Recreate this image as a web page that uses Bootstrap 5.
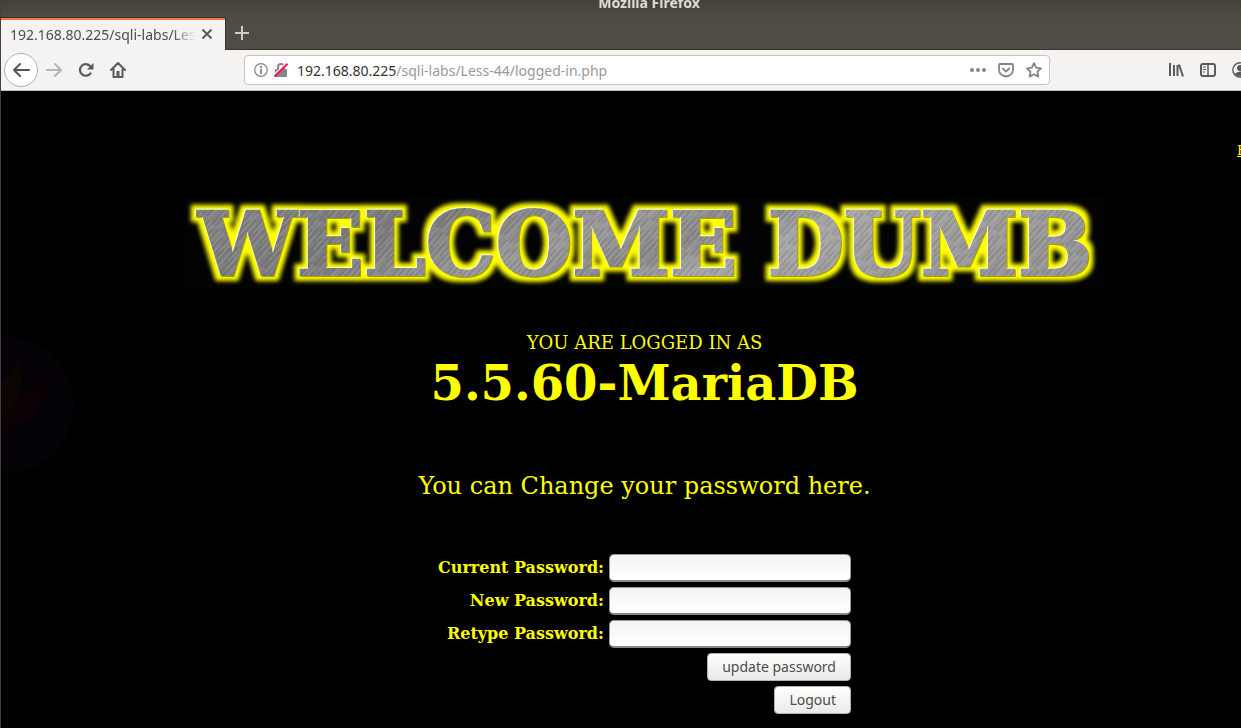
<!DOCTYPE html>
<html lang="en">
<head>
<meta charset="utf-8">
<title>192.168.80.225/sqli-labs/Less-44/logged-in.php</title>
<meta name="viewport" content="width=device-width, initial-scale=1">
<link rel="stylesheet" href="https://cdn.jsdelivr.net/npm/bootstrap@5.3.0/dist/css/bootstrap.min.css">
<style>
  :root { --ui: "Noto Sans", "Open Sans", sans-serif; --serif: "DejaVu Serif", serif; }
  body { background: #000; font-family: var(--ui); font-size: 14px; border-left: 1px solid #4a3c3f; }
  svg { display: block; flex: none; }
  .chrome-title { height: 18px; background: linear-gradient(#42413b, #4e4b43); color: #dfdbd2; font-size: 14px; line-height: 18px; padding-left: 56px; }
  .chrome-title span { margin-top: -6px; }
  .tab-strip { height: 32px; background: #504c44; }
  .tab-item { width: 224px; background: #f4f3f1; border: 0; border-top: 2px solid #f0784c; outline: 1px solid #35332e; padding: 0 10px 2px 9px; clip-path: inset(-1px -1px 0 0); }
  .tab-text { color: #4c4c4c; white-space: nowrap; width: 187px; -webkit-mask-image: linear-gradient(90deg, #000 162px, transparent 186px); mask-image: linear-gradient(90deg, #000 162px, transparent 186px); }
  .strip-rest { border-bottom: 1px solid #35332e; padding: 0 0 2px 9px; }
  .plain { background: none; border: 0; padding: 0; color: #5b5b5b; }
  .tool-row { height: 41px; background: #f4f3f1; border-bottom: 1px solid #c4c2be; padding-left: 3px; }
  .go-back { width: 34px; height: 34px; border: 1px solid #b1b1b1; border-radius: 50%; background: #fff; color: #555; margin-right: -8px; }
  .nav-set { width: 240px; gap: 16px; }
  .address { height: 30px; border: 1px solid #c6c4c1; border-radius: 4px; background: #fff; padding: 0 7px 0 9px; color: #858585; margin-right: 118px; }
  .marks { gap: 6px; }
  .acts { gap: 12px; }
  .address .url-line { color: #999; padding-left: 9px; }
  .address b { font-weight: 400; color: #333; }
  .tools-end { gap: 16px; width: 73px; }
  .page { color: #ff0; font-family: var(--serif); padding: 107px 0 12px 47px; min-height: calc(100vh - 91px); }
  .banner { width: 921px; max-width: 100%; height: auto; background: #030303; }
  .as-line { font-size: 18px; line-height: 22px; margin-top: 44px; }
  .who { font-size: 48px; line-height: 58px; font-weight: 700; }
  .hint { font-size: 24px; line-height: 28px; margin: 60px 0 49px; }
  .pass-form { border-collapse: separate; border-spacing: 5px; }
  .pass-form th { font-size: 16px; line-height: 24px; font-weight: 700; text-align: right; padding: 0; }
  .pass-form td { padding: 0; text-align: right; }
  .pass-form input { width: 242px; height: 28px; border: 1px solid #999; border-bottom: 2px solid #888; border-radius: 5px; background: linear-gradient(#f3f3f3, #fff); padding: 0 6px; display: block; }
  .sys-btn { height: 28px; border: 1px solid #b5b2ae; border-radius: 4px; background: linear-gradient(#fff, #ebe9e7); color: #4c4c4c; font: 14px/24px var(--ui); padding: 0 14px; display: inline-block; vertical-align: top; }
  .lotus { left: 0; top: 244px; }
  .corner { right: 0; top: 52px; width: 4px; font-size: 13px; line-height: 16px; }
  .corner a { color: #ff0; }
</style>
</head>
<body class="overflow-hidden">
<header>
  <div class="chrome-title d-flex justify-content-center fw-bold overflow-hidden"><span>Mozilla Firefox</span></div>
  <div class="tab-strip d-flex">
    <div class="tab-item d-flex align-items-center flex-shrink-0">
      <span class="tab-text overflow-hidden">192.168.80.225/sqli-labs/Less-44</span>
      <button class="plain ms-1" aria-label="Close tab"><svg width="12" height="12" viewBox="0 0 12 12" stroke="currentColor" stroke-width="2" fill="none"><path d="M1.500 1.500l9 9M10.500 1.500l-9 9"/></svg></button>
    </div>
    <div class="strip-rest flex-grow-1 d-flex align-items-center">
      <button class="plain" aria-label="New tab"><svg width="16" height="16" viewBox="0 0 16 16" stroke="#d0ccc3" stroke-width="2" fill="none"><path d="M8 1v14M1 8h14"/></svg></button>
    </div>
  </div>
  <nav class="tool-row d-flex align-items-center overflow-hidden" aria-label="Browser toolbar">
    <div class="nav-set d-flex align-items-center flex-shrink-0">
      <button class="go-back p-0 d-flex align-items-center justify-content-center" aria-label="Back"><svg width="18" height="16" viewBox="0 0 18 16" stroke="currentColor" stroke-width="2" fill="none" stroke-linecap="round" stroke-linejoin="round"><path d="M17 8H2M8 2L2 8l6 6"/></svg></button>
      <button class="plain" aria-label="Forward"><svg width="16" height="16" viewBox="0 0 16 16" stroke="#b6b5b4" stroke-width="2" fill="none" stroke-linecap="round" stroke-linejoin="round"><path d="M1 8h14M9 2l6 6-6 6"/></svg></button>
      <button class="plain" aria-label="Reload"><svg width="16" height="16" viewBox="0 0 16 16"><path d="M12.500 11.300A5.800 5.800 0 1 1 12 4" stroke="currentColor" stroke-width="2.200" fill="none" stroke-linecap="round"/><path d="M15.500 1v6.500H9z" fill="currentColor"/></svg></button>
      <button class="plain" aria-label="Home"><svg width="16" height="16" viewBox="0 0 16 16" stroke="currentColor" stroke-width="2" fill="none" stroke-linejoin="round" stroke-linecap="round"><path d="M1 8l7-7 7 7M3.500 7v8h9V7"/><path d="M8 9v5" stroke-width="3" stroke-linecap="butt"/></svg></button>
    </div>
    <div class="address flex-grow-1 d-flex align-items-center">
      <div class="marks d-flex">
        <svg width="14" height="14" viewBox="0 0 14 14" fill="none" stroke="currentColor"><circle cx="7" cy="7" r="6.300" stroke-width="1.200"/><path d="M7 6v5M7 3v2" stroke-width="1.800"/></svg>
        <svg width="14" height="14" viewBox="0 0 14 14"><path d="M4 6V4a3 3 0 0 1 6 0v2" fill="none" stroke="#858585" stroke-width="2"/><rect x="1" y="6" width="12" height="8" rx="1" fill="#858585"/><path d="M0 12.500L12.500 0" stroke="#fff" stroke-width="2"/><path d="M.5 13.500L13.500 .8" stroke="#ff0f4b" stroke-width="2"/></svg>
      </div>
      <span class="url-line flex-grow-1"><b>192.168.80.225</b>/sqli-labs/Less-44/logged-in.php</span>
      <div class="acts d-flex align-items-center">
        <button class="plain" aria-label="Page actions"><svg width="16" height="16" viewBox="0 0 16 16" fill="#858585"><circle cx="2" cy="8" r="2"/><circle cx="8" cy="8" r="2"/><circle cx="14" cy="8" r="2"/></svg></button>
        <button class="plain" aria-label="Save to Pocket"><svg width="16" height="16" viewBox="0 0 16 16" fill="none" stroke="#858585" stroke-width="1.800" stroke-linecap="round" stroke-linejoin="round"><path d="M2 2h12q1 0 1 1v4.500a7 7 0 0 1-14 0V3q0-1 1-1z"/><path d="M4.800 6.500L8 9.600l3.200-3.100"/></svg></button>
        <button class="plain" aria-label="Bookmark"><svg width="16" height="16" viewBox="0 0 16 16" fill="none" stroke="#858585" stroke-width="1.800" stroke-linejoin="round"><path d="M8 1.200l2.100 4.400 4.900.7-3.500 3.400.8 4.900L8 12.300l-4.300 2.300.8-4.900L1 6.300l4.900-.7z"/></svg></button>
      </div>
    </div>
    <div class="tools-end d-flex align-items-center flex-shrink-0 overflow-hidden">
      <button class="plain" aria-label="Library"><svg width="16" height="16" viewBox="0 0 16 16" stroke="currentColor" stroke-width="2" fill="none"><path d="M2 1v13M6 3v11M9.500 3v11M11 2.500l4 12"/></svg></button>
      <button class="plain" aria-label="Sidebars"><svg width="16" height="16" viewBox="0 0 16 16" stroke="currentColor" stroke-width="2" fill="none"><rect x="1" y="2" width="14" height="12" rx="2"/><path d="M8 2v12" stroke-width="1.500"/><path d="M3 5h3M3 7.500h3M3 10h2" stroke-width="1"/></svg></button>
      <button class="plain" aria-label="Account"><svg width="16" height="16" viewBox="0 0 16 16"><circle cx="8" cy="8" r="7.200" fill="none" stroke="currentColor" stroke-width="1.400"/><circle cx="8" cy="6" r="3" fill="currentColor"/><path d="M2.500 12Q8 7 13.500 12 8 17 2.500 12" fill="currentColor"/></svg></button>
    </div>
  </nav>
</header>
<main class="page position-relative d-flex flex-column align-items-center">
  <svg class="lotus position-absolute" width="75" height="140" viewBox="0 0 75 140" aria-hidden="true"><circle cx="4" cy="70" r="69" fill="#040107"/><path d="M0 94V72Q15 60 22 58Q45 50 50 40Q44 70 25 87Q12 95 0 94z" fill="#0b0104"/><path d="M0 82V49Q13 37 17 22Q29 60 0 82z" fill="#0b0602"/></svg>
  <div class="corner position-absolute overflow-hidden"><a href="#">H</a></div>
  <svg class="banner" viewBox="0 0 921 90" role="heading" aria-level="1">
    <defs>
      <linearGradient id="steel" x2="1" y2=".25"><stop offset="0" stop-color="#858585"/><stop offset=".3" stop-color="#7c7c7c"/><stop offset=".5" stop-color="#999"/><stop offset=".62" stop-color="#8a8a8a"/><stop offset=".72" stop-color="#a6a6a6"/><stop offset="1" stop-color="#969696"/></linearGradient>
      <pattern id="brushed" width="921" height="90" patternUnits="userSpaceOnUse"><rect width="921" height="90" fill="url(#steel)"/><rect width="921" height="90" fill="url(#scratches)"/></pattern>
      <pattern id="scratches" width="13" height="37" patternUnits="userSpaceOnUse" patternTransform="rotate(42)"><path d="M1 0v26M6 9v28M10 0v17" stroke="#fff" stroke-opacity=".2" stroke-width=".8"/><path d="M3 5v30M8 0v20M12 12v25" stroke="#000" stroke-opacity=".2" stroke-width=".8"/></pattern>
      <filter id="glow" x="0" y="0" width="921" height="90" filterUnits="userSpaceOnUse" color-interpolation-filters="sRGB">
        <feMorphology in="SourceAlpha" operator="dilate" radius="5" result="wide"/>
        <feGaussianBlur in="wide" stdDeviation="2" result="soft"/>
        <feFlood flood-color="#ff0"/><feComposite in2="soft" operator="in" result="halo"/>
        <feOffset in="SourceAlpha" dx="-1" dy="-1" result="edge"/>
        <feFlood flood-color="#ffffd0"/><feComposite in2="edge" operator="in" result="rim"/>
        <feOffset in="SourceAlpha" dx="1" dy="1" result="low"/>
        <feFlood flood-color="#a89f00"/><feComposite in2="low" operator="in" result="shade"/>
        <feMerge><feMergeNode in="halo"/><feMergeNode in="shade"/><feMergeNode in="rim"/><feMergeNode in="SourceGraphic"/></feMerge>
      </filter>
    </defs>
    <text x="461" y="77" text-anchor="middle" font-family="DejaVu Serif" font-weight="700" font-size="88" fill="url(#brushed)" stroke="url(#brushed)" stroke-width="2" filter="url(#glow)">WELCOME DUMB</text>
  </svg>
  <div class="as-line">YOU ARE LOGGED IN AS</div>
  <div class="who">5.5.60-MariaDB</div>
  <div class="hint">You can Change your password here.</div>
  <form onsubmit="return false">
    <table class="pass-form">
      <tr><th><label for="cur">Current Password:</label></th><td><input id="cur" type="password"></td></tr>
      <tr><th><label for="new">New Password:</label></th><td><input id="new" type="password"></td></tr>
      <tr><th><label for="again">Retype Password:</label></th><td><input id="again" type="password"></td></tr>
      <tr><td colspan="2"><button class="sys-btn">update password</button></td></tr>
      <tr><td colspan="2"><button class="sys-btn" type="button">Logout</button></td></tr>
    </table>
  </form>
</main>
<script src="https://cdn.jsdelivr.net/npm/bootstrap@5.3.0/dist/js/bootstrap.bundle.min.js"></script>
</body>
</html>
